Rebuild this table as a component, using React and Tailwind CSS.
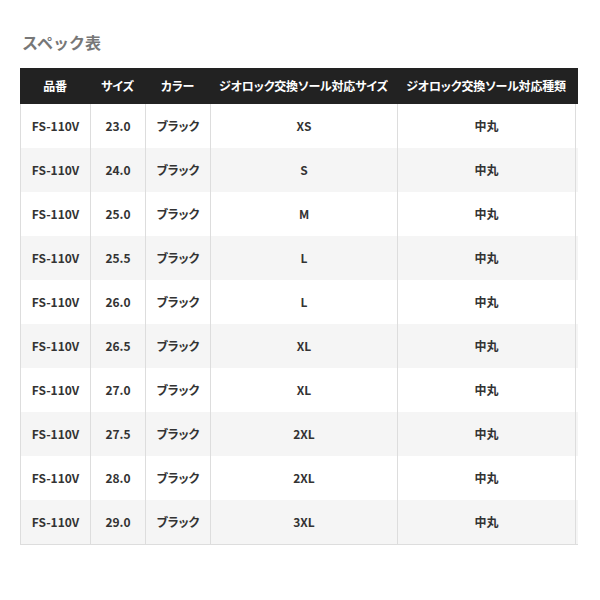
import React from "react";

const sizes = [
  ["23.0", "XS"],
  ["24.0", "S"],
  ["25.0", "M"],
  ["25.5", "L"],
  ["26.0", "L"],
  ["26.5", "XL"],
  ["27.0", "XL"],
  ["27.5", "2XL"],
  ["28.0", "2XL"],
  ["29.0", "3XL"],
];

const cols = "grid grid-cols-[70px_55px_65px_187px_178px_3px]";

const App = () => {
  return (
    <div
      className="w-[600px] h-[600px] bg-white pl-[20px] pt-[31px]"
      style={{ fontFamily: '"Noto Sans CJK JP", "Noto Sans", sans-serif' }}
    >
      <h2 className="pl-[2px] text-[16px] leading-[22px] font-bold text-[#777777]">スペック表</h2>

      <div className="mt-[15px] w-[558px] [font-feature-settings:'palt']">
        <div className={`${cols} h-[36px] bg-[#222222] text-white text-[12px] font-bold items-center text-center tracking-[-0.2px]`}>
          <div>品番</div>
          <div>サイズ</div>
          <div>カラー</div>
          <div>ジオロック交換ソール対応サイズ</div>
          <div>ジオロック交換ソール対応種類</div>
          <div></div>
        </div>

        <div className="border-b border-[#dddddd]">
          {sizes.map(([size, sole], i) => (
            <div
              key={i}
              className={`${cols} h-[44px] text-[12px] font-bold text-[#333333] text-center ${
                i % 2 === 1 ? "bg-[#f5f5f5]" : "bg-white"
              }`}
            >
              <div className="flex items-center justify-center border-l border-[#dddddd]">FS-110V</div>
              <div className="flex items-center justify-center border-l border-[#dddddd]">{size}</div>
              <div className="flex items-center justify-center border-l border-[#dddddd]">ブラック</div>
              <div className="flex items-center justify-center border-l border-[#dddddd]">{sole}</div>
              <div className="flex items-center justify-center border-l border-[#dddddd]">中丸</div>
              <div className="border-l border-[#dddddd]"></div>
            </div>
          ))}
        </div>
      </div>
    </div>
  );
};

export default App;
